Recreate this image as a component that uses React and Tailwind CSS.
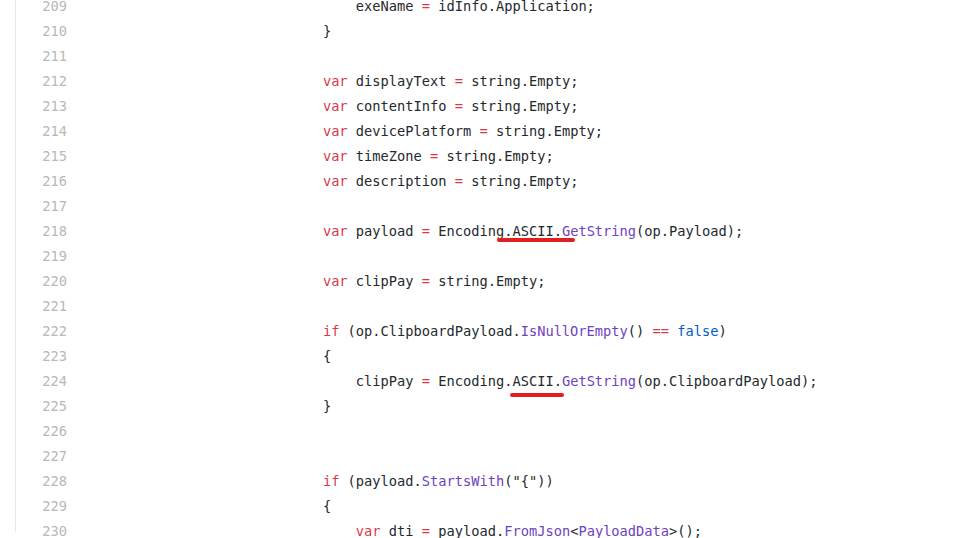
import React from "react";

const K = ({ children }) => <span className="text-[#d73a49]">{children}</span>;
const M = ({ children }) => <span className="text-[#6f42c1]">{children}</span>;
const B = ({ children }) => <span className="text-[#005cc5]">{children}</span>;

const I3 = "            ";
const I4 = "                ";

const lines = [
  [209, <>{I4}exeName = idInfo.Application;</>],
  [210, <>{I3}{"}"}</>],
  [211, null],
  [212, <>{I3}<K>var</K> displayText = string.Empty;</>],
  [213, <>{I3}<K>var</K> contentInfo = string.Empty;</>],
  [214, <>{I3}<K>var</K> devicePlatform = string.Empty;</>],
  [215, <>{I3}<K>var</K> timeZone = string.Empty;</>],
  [216, <>{I3}<K>var</K> description = string.Empty;</>],
  [217, null],
  [218, <>{I3}<K>var</K> payload = <K>=</K>{""}</>, "u1"],
  [219, null],
  [220, <>{I3}<K>var</K> clipPay = string.Empty;</>],
  [221, null],
  [222, <>{I3}<K>if</K> (op.ClipboardPayload.<M>IsNullOrEmpty</M>() <K>==</K> <B>false</B>)</>],
  [223, <>{I3}{"{"}</>],
  [224, null, "u2"],
  [225, <>{I3}{"}"}</>],
  [226, null],
  [227, null],
  [228, <>{I3}<K>if</K> (payload.<M>StartsWith</M>({'"{"'}))</>],
  [229, <>{I3}{"{"}</>],
  [230, <>{I4}<K>var</K> dti = payload.<M>FromJson</M>{"<"}<M>PayloadData</M>{">"}();</>],
];

lines[9][1] = <>{I3}<K>var</K> payload <K>=</K> Encoding.ASCII.<M>GetString</M>(op.Payload);</>;
lines[15][1] = <>{I4}clipPay <K>=</K> Encoding.ASCII.<M>GetString</M>(op.ClipboardPayload);</>;
lines[4][1] = <>{I3}<K>var</K> contentInfo <K>=</K> string.Empty;</>;
lines[3][1] = <>{I3}<K>var</K> displayText <K>=</K> string.Empty;</>;
lines[5][1] = <>{I3}<K>var</K> devicePlatform <K>=</K> string.Empty;</>;
lines[6][1] = <>{I3}<K>var</K> timeZone <K>=</K> string.Empty;</>;
lines[7][1] = <>{I3}<K>var</K> description <K>=</K> string.Empty;</>;
lines[11][1] = <>{I3}<K>var</K> clipPay <K>=</K> string.Empty;</>;
lines[0][1] = <>{I4}exeName <K>=</K> idInfo.Application;</>;
lines[21][1] = <>{I4}<K>var</K> dti <K>=</K> payload.<M>FromJson</M>{"<"}<M>PayloadData</M>{">"}();</>;

export default function App() {
  return (
    <div className="w-[976px] h-[538px] overflow-hidden bg-white">
      <div className="ml-[15px] h-full border-l border-[#e8e8e8]">
        <div
          className="-mt-[6.5px] flex flex-col text-[13.7px] leading-[25px] text-[#24292e]"
          style={{ fontFamily: '"DejaVu Sans Mono", "Liberation Mono", monospace' }}
        >
          {lines.map(([n, code, u]) => (
            <div key={n} className="relative flex h-[25px]">
              <div className="w-[51px] shrink-0 text-right text-[#b8b8b8]">{n}</div>
              <div className="ml-[157px] whitespace-pre">{code}</div>
              {u === "u1" && (
                <div className="absolute left-[481px] top-[19px] h-[4px] w-[78px] rounded-full bg-[#e41e1e]" />
              )}
              {u === "u2" && (
                <div className="absolute left-[494px] top-[24px] h-[4px] w-[54px] rounded-full bg-[#e41e1e]" />
              )}
            </div>
          ))}
        </div>
      </div>
    </div>
  );
}
